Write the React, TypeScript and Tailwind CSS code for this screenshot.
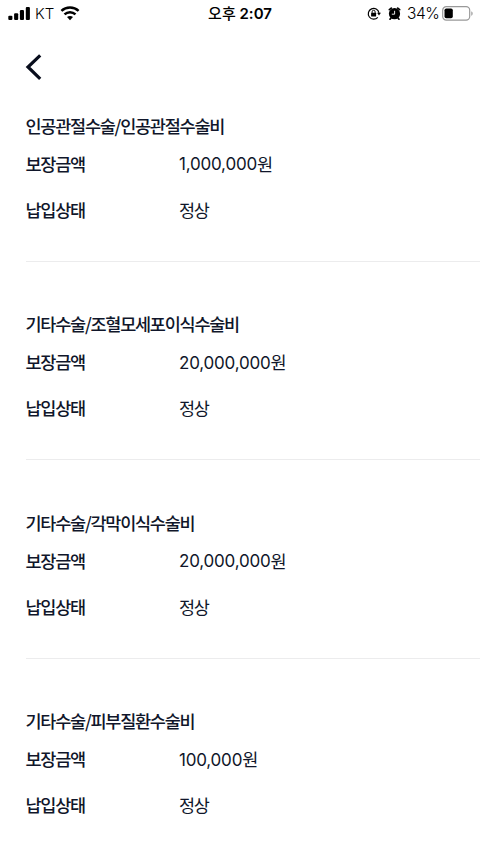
type Coverage = { title: string; amount: string; status: string };

const coverages: Coverage[] = [
  { title: "인공관절수술/인공관절수술비", amount: "1,000,000", status: "정상" },
  { title: "기타수술/조혈모세포이식수술비", amount: "20,000,000", status: "정상" },
  { title: "기타수술/각막이식수술비", amount: "20,000,000", status: "정상" },
  { title: "기타수술/피부질환수술비", amount: "100,000", status: "정상" },
];

function StatusBar() {
  return (
    <header className="grid h-[27px] grid-cols-3 items-center font-['Inter','Noto_Sans_CJK_KR',sans-serif] text-[15px] leading-none text-black">
      <div className="flex items-center pl-2">
        <svg width="23" height="14" viewBox="0 0 23 14" fill="currentColor">
          <rect x="0.3" y="8.7" width="4.1" height="4.4" rx="1.1" />
          <rect x="6.1" y="6.2" width="4.1" height="6.9" rx="1.1" />
          <rect x="11.9" y="3.1" width="4.1" height="10" rx="1.1" />
          <rect x="17.8" y="0" width="4.1" height="13.1" rx="1.1" />
        </svg>
        <span className="ml-1 w-[19px] text-[15px] font-[350]">KT</span>
        <svg className="ml-[6px]" width="20" height="15" viewBox="0 0 20 15" fill="none" stroke="currentColor" strokeWidth="2.5">
          <path d="M1.4 4.9C6.2.5 13.8.5 18.6 4.9" />
          <path d="M4.5 8.4c3.1-2.9 7.9-2.9 11 0" />
          <path d="M10 14.2 7 11.1c1.7-1.6 4.3-1.6 6 0z" fill="currentColor" stroke="none" />
        </svg>
      </div>
      <div className="text-center text-[15px] font-semibold whitespace-nowrap">
        <span className="font-medium">오후</span> 2:07
      </div>
      <div className="flex items-center justify-end pr-[7px]">
        <svg width="14" height="14" viewBox="0 0 14 14" fill="none" stroke="currentColor" strokeWidth="1.2">
          <path d="M10.8 10.3A5.4 5.4 0 1 1 12 5.8" />
          <path d="M10.1 5.7h3.8L12 8.4z" fill="currentColor" stroke="none" />
          <rect x="4.1" y="5.8" width="5" height="3.8" rx="0.5" fill="currentColor" stroke="none" />
          <path d="M5.1 5.9V4.8a1.5 1.5 0 0 1 3 0v1.1" strokeWidth="1" />
        </svg>
        <svg className="ml-[7px]" width="13" height="14" viewBox="0 0 13 14" fill="none">
          <circle cx="6.5" cy="6.7" r="5.6" fill="currentColor" />
          <path d="M1.4 2.7 3.3 1.1M11.6 2.7 9.7 1.1M2.9 11.1l-.9 1.1M10.1 11.1l.9 1.1" stroke="currentColor" strokeWidth="1.7" strokeLinecap="round" />
          <path d="M6.6 3.8v3.4H3.8" stroke="white" strokeWidth="0.9" />
        </svg>
        <span className="ml-[6px] w-[32px] text-[15.5px] font-[350] tracking-[-0.4px] whitespace-nowrap">34%</span>
        <svg className="ml-[3px]" width="31" height="15" viewBox="0 0 31 15" fill="none">
          <rect x="0.7" y="0.7" width="27" height="13.4" rx="3.6" stroke="#999" strokeWidth="1.2" />
          <rect x="2.5" y="2.5" width="8.3" height="9.8" rx="1.8" fill="black" />
          <path d="M29.3 5.2c1.8.8 1.8 3.8 0 4.6z" fill="#999" />
        </svg>
      </div>
    </header>
  );
}

function CoverageItem({ title, amount, status }: Coverage) {
  return (
    <article className="h-[198.4px] shrink-0">
      <div className="flex h-[148px] flex-col border-b border-[#ececed]">
        <h2 className="h-6 font-medium">{title}</h2>
        <dl className="mt-[14.2px] grid grid-cols-[153.5px_1fr] gap-y-[22px]">
          <dt className="h-6 font-medium">보장금액</dt>
          <dd className="flex h-6 items-center">
            <span className="pt-px font-['Inter'] text-[17px] font-normal tracking-[-0.2px]">{amount}</span>원
          </dd>
          <dt className="h-6 font-medium">납입상태</dt>
          <dd className="h-6">{status}</dd>
        </dl>
      </div>
    </article>
  );
}

export default function App() {
  return (
    <div className="h-[854px] w-[480px] overflow-hidden bg-white">
      <StatusBar />
      <nav className="flex h-[86.8px] items-start pt-[27px] pl-[25px]">
        <button aria-label="뒤로">
          <svg width="17" height="26" viewBox="0 0 17 26" fill="none" stroke="#080d1c" strokeWidth="3.2">
            <path d="M15.2 1.4 3 13l12.2 11.8" />
          </svg>
        </button>
      </nav>
      <main className="flex flex-col pl-[25.5px] font-['Noto_Sans_CJK_KR',sans-serif] text-[17.5px] leading-6 tracking-[-1.25px] text-[#10162a]">
        {coverages.map((c) => (
          <CoverageItem key={c.title} {...c} />
        ))}
      </main>
    </div>
  );
}
